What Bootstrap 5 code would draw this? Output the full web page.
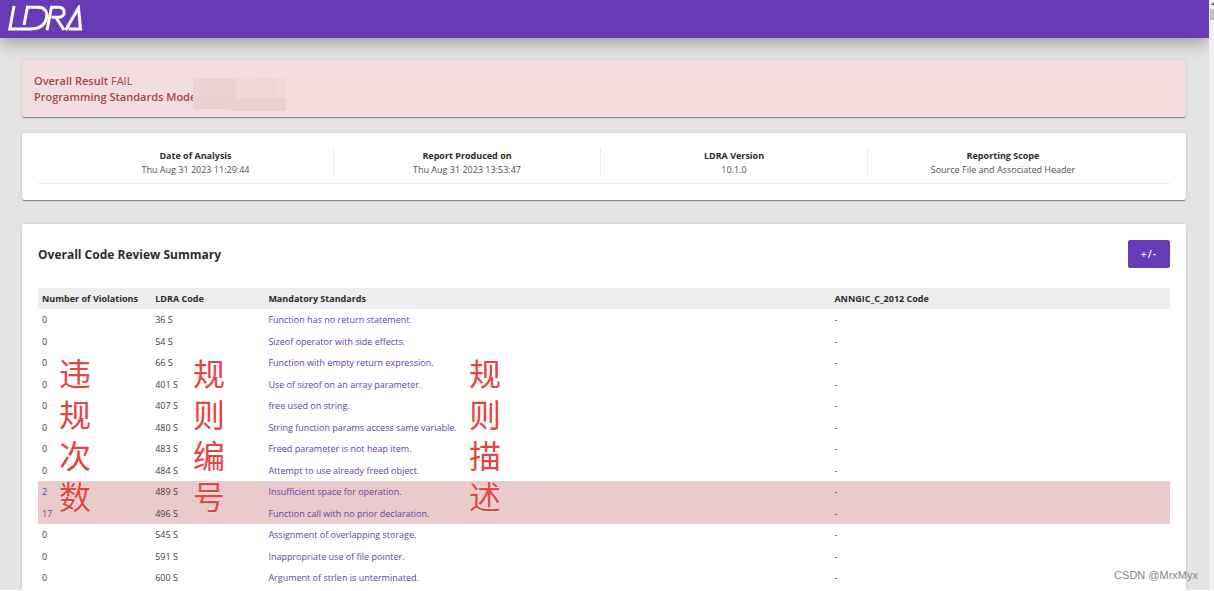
<!DOCTYPE html>
<html lang="en">
<head>
<meta charset="utf-8">
<meta name="viewport" content="width=device-width, initial-scale=1">
<title>LDRA Code Review Report</title>
<link href="https://cdn.jsdelivr.net/npm/bootstrap@5.3.0/dist/css/bootstrap.min.css" rel="stylesheet">
<style>
  :root { --brand: #673ab7; --small: 9px; }
  body { font-family: "Open Sans", "Noto Sans", "Noto Sans CJK SC", sans-serif; font-size: var(--small); line-height: 14px; color: #404040; background: #fff; }
  .report-shell { height: 100vh; overflow: hidden; padding-bottom: 1px; }
  .report-page { background: #e4e4e4; min-width: 0; overflow: hidden; }
  .topbar { height: 38px; background: var(--brand); box-shadow: 0 4px 18px rgba(0,0,0,.35); padding: 0 8px; }
  .panel { border-radius: 2px; background: #fff; box-shadow: 0 2px 1px -1px rgba(0,0,0,.25), 0 0 3px rgba(0,0,0,.15), 0 1px 1px rgba(0,0,0,.2); }
  .report-main { padding: 22px 23px 0 22px; }
  .result-panel { background: #f2dede; color: #a94442; font-size: 11px; line-height: 16px; padding: 13px 12px 12px; margin-bottom: 16px; }
  .result-panel b { font-weight: 600; }
  .redacted { position: absolute; left: 171px; top: 18px; }
  .info-panel { padding: 15px 16px 16px; margin-bottom: 24px; }
  .info-grid { display: grid; grid-template-columns: 275fr 267fr 267fr 271fr; padding: 0 32px 7px 20px; border-bottom: 1px solid #eee; text-align: center; }
  .info-grid > div + div { border-left: 1px solid #eee; }
  .info-grid dt, th { color: #2c2c2c; font-weight: 700; }
  .info-grid dd { margin: 0; line-height: 13px; color: #505050; }
  .info-grid dt { line-height: 15px; }
  .summary-panel { padding: 16px; min-height: 700px; }
  h1 { font-size: 12px; line-height: 30px; font-weight: 700; color: #2c2c2c; }
  .toggle-btn { --bs-btn-color: #fff; --bs-btn-bg: var(--brand); --bs-btn-border-color: var(--brand); --bs-btn-hover-bg: #5a32a3; --bs-btn-hover-color: #fff; --bs-btn-border-radius: 2px; --bs-btn-padding-x: 0; --bs-btn-padding-y: 0; width: 42px; height: 28px; font-size: 10px; font-weight: 600; letter-spacing: 1px; }
  .rules { margin-top: 18px; table-layout: fixed; width: 100%; }
  .rules th, .rules td { padding: 0 4px; height: 22px; line-height: 20px; }
  .rules th { white-space: nowrap; }
  .rules thead th, .rules tbody tr:nth-child(even) td { height: 21px; }
  .rules thead { background: #eee; }
  .rules .violated { background: #e9cbcc; }
  .rules a { color: #6440ad; text-decoration: none; }
  .note { position: absolute; top: 128px; width: 32px; font: 32px/41px "Noto Sans CJK SC", sans-serif; color: #e8443f; text-shadow: 0 0 2px #fff; }
  .note-count { left: 37px; }
  .note-code { left: 171px; }
  .note-text { left: 447px; }
  .scroll-track { width: 5px; background: #f1f1f1; }
  .watermark { position: absolute; right: 16px; bottom: 9px; font: 11px/14px "Liberation Sans", sans-serif; color: #858585; }
</style>
</head>
<body>
<div class="report-shell d-flex position-relative">
  <div class="report-page flex-grow-1">
    <header class="topbar d-flex align-items-center">
      <svg width="75" height="28" viewBox="0 0 75 28" fill="none" stroke="#fff" stroke-width="3" role="img" aria-label="LDRA">
        <path d="M6 1 1.800 24H22c9 0 15-4 16.500-11C40 6 36 2.300 30 2.300H18M19.500 2 16 20"/>
        <path d="M39 25.200 43.500 2.300H51c7 0 7 10-.5 10h-7M48 12.500 56 25M57.500 25.200 70.500 3l2 21H60.500"/>
      </svg>
    </header>
    <main class="report-main">
      <section class="panel result-panel position-relative">
        <div><b>Overall Result</b> FAIL</div>
        <div><b>Programming Standards Mode</b></div>
        <svg class="redacted" width="94" height="36" aria-hidden="true">
          <path fill="#ebd2d4" d="M0 0h43v18H0z"/><path fill="#efd9da" d="M43 0h50v20H43z"/><path fill="#edd6d7" d="M62 0h20v20H62z"/><path fill="#e9d1d2" d="M0 18h38v13H0z"/><path fill="#e8d1d2" d="M38 20h55v13H38zM38 18h5v2h-5z"/>
        </svg>
      </section>
      <section class="panel info-panel">
        <dl class="info-grid mb-0">
          <div><dt>Date of Analysis</dt><dd>Thu Aug 31 2023 11:29:44</dd></div>
          <div><dt>Report Produced on</dt><dd>Thu Aug 31 2023 13:53:47</dd></div>
          <div><dt>LDRA Version</dt><dd>10.1.0</dd></div>
          <div><dt>Reporting Scope</dt><dd>Source File and Associated Header</dd></div>
        </dl>
      </section>
      <section class="panel summary-panel position-relative">
        <div class="d-flex justify-content-between align-items-start">
          <h1 class="m-0">Overall Code Review Summary</h1>
          <button type="button" class="btn toggle-btn">+/-</button>
        </div>
        <table class="rules">
          <colgroup><col style="width:10%"><col style="width:10%"><col style="width:50%"><col style="width:30%"></colgroup>
          <thead><tr><th>Number of Violations</th><th>LDRA Code</th><th>Mandatory Standards</th><th>ANNGIC_C_2012 Code</th></tr></thead>
          <tbody>
            <tr><td>0</td><td>36 S</td><td><a href="#">Function has no return statement.</a></td><td>-</td></tr>
            <tr><td>0</td><td>54 S</td><td><a href="#">Sizeof operator with side effects.</a></td><td>-</td></tr>
            <tr><td>0</td><td>66 S</td><td><a href="#">Function with empty return expression.</a></td><td>-</td></tr>
            <tr><td>0</td><td>401 S</td><td><a href="#">Use of sizeof on an array parameter.</a></td><td>-</td></tr>
            <tr><td>0</td><td>407 S</td><td><a href="#">free used on string.</a></td><td>-</td></tr>
            <tr><td>0</td><td>480 S</td><td><a href="#">String function params access same variable.</a></td><td>-</td></tr>
            <tr><td>0</td><td>483 S</td><td><a href="#">Freed parameter is not heap item.</a></td><td>-</td></tr>
            <tr><td>0</td><td>484 S</td><td><a href="#">Attempt to use already freed object.</a></td><td>-</td></tr>
            <tr class="violated"><td><a href="#">2</a></td><td>489 S</td><td><a href="#">Insufficient space for operation.</a></td><td>-</td></tr>
            <tr class="violated"><td><a href="#">17</a></td><td>496 S</td><td><a href="#">Function call with no prior declaration.</a></td><td>-</td></tr>
            <tr><td>0</td><td>545 S</td><td><a href="#">Assignment of overlapping storage.</a></td><td>-</td></tr>
            <tr><td>0</td><td>591 S</td><td><a href="#">Inappropriate use of file pointer.</a></td><td>-</td></tr>
            <tr><td>0</td><td>600 S</td><td><a href="#">Argument of strlen is unterminated.</a></td><td>-</td></tr>
          </tbody>
        </table>
        <div class="note note-count" lang="zh-CN">违规次数</div>
        <div class="note note-code" lang="zh-CN">规则编号</div>
        <div class="note note-text" lang="zh-CN">规则描述</div>
      </section>
    </main>
  </div>
  <div class="scroll-track" aria-hidden="true">
    <svg width="5" height="20"><path d="M2 5l3-3v3z" fill="#505050"/><path d="M1 9h4v11H1z" fill="#c1c1c1"/></svg>
  </div>
  <div class="watermark">CSDN @MrxMyx</div>
</div>
<script src="https://cdn.jsdelivr.net/npm/bootstrap@5.3.0/dist/js/bootstrap.bundle.min.js"></script>
</body>
</html>
